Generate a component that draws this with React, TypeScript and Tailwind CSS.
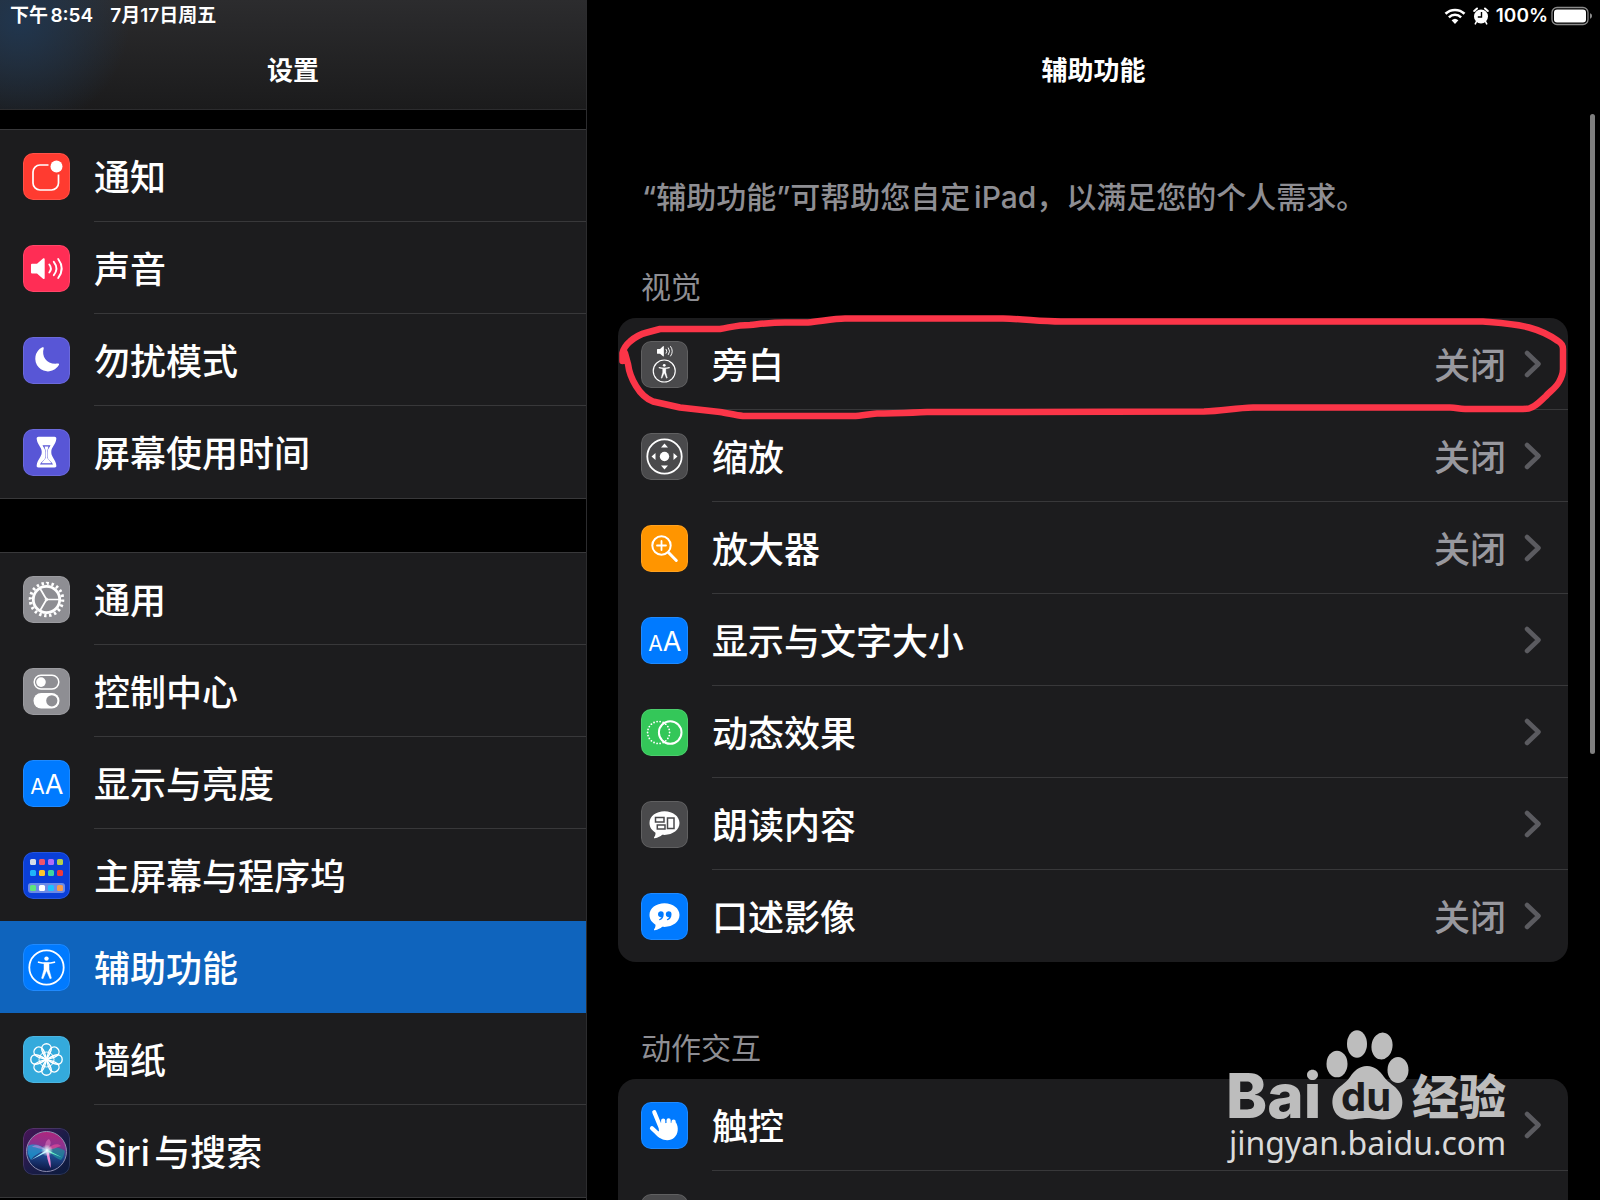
import React from 'react';

interface RowItem {
  label: string;
  icon: React.ReactNode;
  tile: string;
  value?: string;
  active?: boolean;
}

const Person = () => (
  <>
    <circle cx="23.5" cy="23.5" r="17.2" fill="none" stroke="#fff" strokeWidth="1.8" />
    <circle cx="23.5" cy="14.6" r="2.2" fill="#fff" />
    <path
      d="M15.6 18.2c2.6.7 4.6.9 7.9.9s5.3-.2 7.9-.9"
      fill="none"
      stroke="#fff"
      strokeWidth="1.7"
      strokeLinecap="round"
    />
    <path
      d="M21 19h5v6.5l2.4 8.7-1.4.6-3.5-8.3-3.5 8.3-1.4-.6L21 25.500z"
      fill="#fff"
      stroke="#fff"
      strokeWidth=".5"
      strokeLinejoin="round"
    />
  </>
);

const Speaker = () => (
  <>
    <path
      d="M9 18.8h5l6-5.3c.8-.7 1.7-.2 1.7.8v18.6c0 1-.9 1.5-1.7.8l-6-5.3H9a1 1 0 0 1-1-1v-7.6a1 1 0 0 1 1-1z"
      fill="#fff"
    />
    <g fill="none" stroke="#fff" strokeWidth="1.9" strokeLinecap="round">
      <path d="M26.3 19.500q3.200 4 0 8" />
      <path d="M30.8 16.800q5.200 6.700 0 13.400" />
      <path d="M35.2 14q7 9.500 0 19" />
    </g>
  </>
);

const LettersAA = () => (
  <g fill="#fff" textAnchor="middle" fontWeight="400" className="font-[Inter,sans-serif]">
    <text x="14.5" y="34" fontSize="21">A</text>
    <text x="31" y="34" fontSize="27">A</text>
  </g>
);

const Bubble = () => (
  <path
    d="M23.500 10.300c-8.400 0-15 5-15 11.800 0 4.300 2.500 7.600 6 9.600.1 1.800-.4 3.200-1.400 4.500-.5.700 0 1.100.7 1 3.200-.5 5.600-1.800 7.400-3.400.8.100 1.500.1 2.300.1 8.400 0 15-5.100 15-11.800s-6.600-11.800-15-11.800z"
    fill="#fff"
  />
);

const Notifications = () => (
  <>
    <path
      d="M25.500 12H17a7 7 0 0 0-7 7v11a7 7 0 0 0 7 7h11.500a7 7 0 0 0 7-7v-8.500"
      fill="none"
      stroke="#fff"
      strokeWidth="1.7"
    />
    <circle cx="33.5" cy="13.5" r="6" fill="#fff" />
  </>
);

const Moon = () => (
  <path
    d="M19.300 10.300c.9-.4 1.700.2 1.400 1.100-2.500 8.200 3.400 16.600 14.100 15.200 1-.1 1.500.6 1.100 1.500A12.700 12.700 0 1 1 19.300 10.300z"
    fill="#fff"
  />
);

const Hourglass = () => (
  <>
    <path
      d="M15.500 7.800h16c1.500 0 2 1 1.800 2.300-.6 5.400-5 8.400-5 12.400v1.300c0 4 4.400 7 5 12.400.2 1.300-.3 2.300-1.800 2.300h-16c-1.500 0-2-1-1.800-2.300.6-5.400 5-8.400 5-12.400v-1.300c0-4-4.400-7-5-12.400-.2-1.300.3-2.300 1.800-2.300z"
      fill="#fff"
    />
    <path
      d="M19.500 16.200h8c-1.200 2.500-2.900 3.700-2.900 7v4c0 4.300 3.700 4.500 5.400 8.300H17c1.700-3.800 5.400-4 5.400-8.300v-4c0-3.300-1.700-4.500-2.900-7z"
      fill="#5856d6"
    />
    <path d="M21.500 17.500h4l-1.200 4.200V29l4.200 5.300h-10L22.700 29v-7.300z" fill="#fff" />
  </>
);

const Gear = () => (
  <g fill="none" stroke="#fff">
    <circle cx="23.5" cy="23.5" r="13.2" strokeWidth="2.8" />
    <circle cx="23.5" cy="23.5" r="16.2" strokeWidth="3.2" pathLength="80" strokeDasharray="1.9 2.1" />
    <path d="M23.500 23.500H36M23.500 23.500l-6.400-11M23.500 23.500l-6.400 11" strokeWidth="1.7" />
    <circle cx="23.5" cy="23.5" r="1.3" strokeWidth="1" />
  </g>
);

const Toggles = () => (
  <>
    <rect x="11.2" y="7.3" width="24.6" height="13.6" rx="6.8" fill="none" stroke="#fff" strokeWidth="1.5" />
    <circle cx="18" cy="14.1" r="4.8" fill="#fff" />
    <rect x="10.5" y="25" width="26" height="15.5" rx="7.7" fill="#fff" />
    <circle cx="28.8" cy="32.8" r="5.6" fill="#8e8e93" />
  </>
);

const APP_COLORS = [
  ['#d8dce8', '#f2536b', '#b06cf8', '#b5d04a'],
  ['#1eb5f8', '#fcc62d', '#3fd6a0', '#f03a3a'],
  ['#5ee67c', '#ffffff', '#1ec2ff', '#f79c4b'],
];
const APP_X = [7, 16, 25, 34];
const APP_Y = [7, 18, 33];

const HomeScreen = () => (
  <>
    <rect x="5" y="31" width="37" height="10" rx="3" fill="#fff" fillOpacity=".4" />
    {APP_COLORS.map((row, r) =>
      row.map((color, c) => (
        <rect key={`${r}-${c}`} x={APP_X[c]} y={APP_Y[r]} width="6" height="6" rx="1.5" fill={color} />
      ))
    )}
  </>
);

const Flower = () => (
  <g fill="none" stroke="#fff" strokeWidth="1.4">
    {[0, 45, 90, 135, 180, 225, 270, 315].map((angle) => (
      <path
        key={angle}
        d="M23.500 23.500C21 19 18.700 16.200 18.700 12.600a4.800 4.800 0 0 1 9.600 0c0 3.600-2.300 6.400-4.800 10.900z"
        transform={`rotate(${angle} 23.5 23.5)`}
      />
    ))}
    <circle cx="23.5" cy="23.5" r="7.5" strokeWidth="1" />
  </g>
);

const Siri = () => (
  <>
    <defs>
      <linearGradient id="siriBack" x1="0" y1="0" x2="1" y2="1">
        <stop offset="0" stopColor="#4a1458" />
        <stop offset=".5" stopColor="#1c1c48" />
        <stop offset="1" stopColor="#0b1b3c" />
      </linearGradient>
      <linearGradient id="siriOrb" x1=".55" y1="0" x2=".45" y2="1">
        <stop offset="0" stopColor="#b0257c" />
        <stop offset=".35" stopColor="#8a3390" />
        <stop offset=".6" stopColor="#1f4a90" />
        <stop offset="1" stopColor="#0d1440" />
      </linearGradient>
      <radialGradient id="siriGlow">
        <stop offset="0" stopColor="#fff" />
        <stop offset=".35" stopColor="#d8f4ff" stopOpacity=".75" />
        <stop offset="1" stopColor="#fff" stopOpacity="0" />
      </radialGradient>
    </defs>
    <rect width="47" height="47" rx="10" fill="url(#siriBack)" />
    <circle cx="23.5" cy="23.5" r="20" fill="url(#siriOrb)" stroke="#8f8fb0" strokeWidth="1" />
    <path d="M24 22C18 17 10 15 5 18c-1 5 0 10 3 14 3-5 9-8 16-10z" fill="#1f9fd6" fillOpacity=".7" />
    <path d="M24 22c7-4 13-3 18 1-1 4-2 7-4 9-4-1-9-5-14-10z" fill="#1b8f9c" fillOpacity=".7" />
    <path d="M23 22c-2-5 0-10 3-11 3 3 2 7-3 11z" fill="#f08ac8" fillOpacity=".45" />
    <path d="M23 22c6-6 12-7 15-4-4 1-8 4-15 4z" fill="#e0489a" fillOpacity=".7" />
    <path d="M23 22c-6-5-11-6-14-3 4 0 8 2 14 3z" fill="#c58ad8" fillOpacity=".6" />
    <path d="M23 21h2c1.500 7 3.500 14 2.500 19C25 34 23.500 28 23 21z" fill="#f08ad8" />
    <path d="M25 21L8 32l16-8z" fill="#a9f5ff" />
    <path d="M23 21l16 8.500-14-5.500z" fill="#6af5c8" />
    <circle cx="24" cy="22.5" r="6" fill="url(#siriGlow)" />
  </>
);

const VoiceOver = () => (
  <>
    <g transform="translate(12 -1.5) scale(.5)">
      <Speaker />
    </g>
    <g transform="translate(8.2 15) scale(.64)">
      <Person />
    </g>
  </>
);

const ZoomPad = () => (
  <>
    <circle cx="23.5" cy="23.5" r="17.2" fill="none" stroke="#fff" strokeWidth="1.8" />
    <circle cx="23.5" cy="23.5" r="4.7" fill="#fff" />
    <path
      d="M23.500 10.500l3.500 4h-7zM23.500 36.500l3.500-4h-7zM10.500 23.500l4-3.500v7zM36.500 23.500l-4-3.500v7z"
      fill="#fff"
    />
  </>
);

const Magnifier = () => (
  <g fill="none" stroke="#fff" strokeLinecap="round">
    <circle cx="20.5" cy="20.5" r="9.2" strokeWidth="2" />
    <path d="M20.500 16v9M16 20.500h9" strokeWidth="1.8" />
    <path d="M27.500 27.500l7.800 8" strokeWidth="3" />
  </g>
);

const Motion = () => (
  <g fill="none" stroke="#fff">
    <circle cx="29.2" cy="23.5" r="11.3" strokeWidth="2" />
    <circle
      cx="17.6"
      cy="23.5"
      r="11"
      strokeWidth="1.8"
      strokeLinecap="round"
      pathLength="88"
      strokeDasharray="0 4"
    />
  </g>
);

const SpokenContent = () => (
  <>
    <Bubble />
    <g fill="none" stroke="#4a4a4c" strokeWidth="1.5">
      <rect x="14.5" y="16.5" width="8.5" height="4.5" />
      <rect x="16.3" y="24" width="7.7" height="4" />
      <rect x="26.5" y="17" width="6.5" height="10.5" />
    </g>
  </>
);

const Descriptions = () => (
  <>
    <Bubble />
    <g fill="#007aff">
      <path d="M19.700 18.300a3 3 0 0 0-.5 5.900c.5.100 1 0 1.300-.1-.4 1-1.100 1.700-2.200 2.200-.5.300-.2 1 .4.900 2.500-.6 4-2.800 4-5.700a3 3 0 0 0-3-3.200z" />
      <path d="M27.500 18.300a3 3 0 0 0-.5 5.900c.5.100 1 0 1.300-.1-.4 1-1.100 1.700-2.200 2.200-.5.300-.2 1 .4.900 2.500-.6 4-2.800 4-5.700a3 3 0 0 0-3-3.200z" />
    </g>
  </>
);

const Touch = () => (
  <>
    <path
      d="M13.300 10.300L19 24M11 26.200l7.500 7M22.200 18.500v6M27.600 18.300v6M32.600 19.500v5"
      fill="none"
      stroke="#fff"
      strokeWidth="4.2"
      strokeLinecap="round"
    />
    <path
      d="M17 21.500L35 20.500c1.500 2.600 2 5.300 1.700 8-.6 5.700-4.800 9.700-10.500 9.700-5 0-8-2.200-11.700-6.200l3.500-3z"
      fill="#fff"
    />
  </>
);

const DEVICE_ITEMS: RowItem[] = [
  { label: '通知', icon: <Notifications />, tile: 'bg-[#ff3b30]' },
  { label: '声音', icon: <Speaker />, tile: 'bg-[#ff2d55]' },
  { label: '勿扰模式', icon: <Moon />, tile: 'bg-[#5856d6]' },
  { label: '屏幕使用时间', icon: <Hourglass />, tile: 'bg-[#5856d6]' },
];

const GENERAL_ITEMS: RowItem[] = [
  { label: '通用', icon: <Gear />, tile: 'bg-[#8e8e93]' },
  { label: '控制中心', icon: <Toggles />, tile: 'bg-[#8e8e93]' },
  { label: '显示与亮度', icon: <LettersAA />, tile: 'bg-[#007aff]' },
  { label: '主屏幕与程序坞', icon: <HomeScreen />, tile: 'bg-[#0a3fd8]' },
  { label: '辅助功能', icon: <Person />, tile: 'bg-[#007aff]', active: true },
  { label: '墙纸', icon: <Flower />, tile: 'bg-[#34aadc]' },
  { label: 'Siri与搜索', icon: <Siri />, tile: 'bg-[#1c1c48]' },
];

const VISION_ITEMS: RowItem[] = [
  { label: '旁白', icon: <VoiceOver />, tile: 'bg-[#4a4a4c]', value: '关闭' },
  { label: '缩放', icon: <ZoomPad />, tile: 'bg-[#4a4a4c]', value: '关闭' },
  { label: '放大器', icon: <Magnifier />, tile: 'bg-[#ff9500]', value: '关闭' },
  { label: '显示与文字大小', icon: <LettersAA />, tile: 'bg-[#007aff]' },
  { label: '动态效果', icon: <Motion />, tile: 'bg-[#34c759]' },
  { label: '朗读内容', icon: <SpokenContent />, tile: 'bg-[#4a4a4c]' },
  { label: '口述影像', icon: <Descriptions />, tile: 'bg-[#007aff]', value: '关闭' },
];

const MOTOR_ITEMS: RowItem[] = [
  { label: '触控', icon: <Touch />, tile: 'bg-[#007aff]' },
  { label: '切换控制', icon: null, tile: 'bg-[#4a4a4c]' },
];

const Tile = ({ item }: { item: RowItem }) => (
  <span className={`h-[47px] w-[47px] shrink-0 overflow-hidden rounded-[10px] ${item.tile}`}>
    <svg viewBox="0 0 47 47" className="h-full w-full" aria-hidden="true">
      {item.icon}
      <rect x=".5" y=".5" width="46" height="46" rx="9.5" fill="none" stroke="#fff" strokeOpacity=".12" />
    </svg>
  </span>
);

const Chevron = () => (
  <svg viewBox="0 0 18 28" className="h-7 w-[18px] shrink-0" aria-hidden="true">
    <path
      d="M3 3l11.500 11L3 25"
      fill="none"
      stroke="#5b5b60"
      strokeWidth="4.5"
      strokeLinecap="round"
      strokeLinejoin="round"
    />
  </svg>
);

const SidebarList = ({ items }: { items: RowItem[] }) => (
  <ul className="border-y border-[#38383a] bg-[#1c1c1e]">
    {items.map((item, idx) => {
      const next = items[idx + 1];
      const lined = next && !next.active && !item.active;
      return (
        <li key={item.label}>
          <a
            href="#"
            aria-current={item.active ? 'page' : undefined}
            className={`flex h-[92px] items-center gap-6 pl-[23px] ${item.active ? 'bg-[#0f64bd]' : ''}`}
          >
            <Tile item={item} />
            <span
              className={`flex h-full flex-1 items-center border-b pt-1 ${
                lined ? 'border-[#38383a]' : 'border-transparent'
              }`}
            >
              {item.label}
            </span>
          </a>
        </li>
      );
    })}
  </ul>
);

const CardList = ({ items }: { items: RowItem[] }) => (
  <ul className="overflow-hidden rounded-[18px] bg-[#1c1c1e]">
    {items.map((item, idx) => (
      <li key={item.label}>
        <a href="#" className="flex h-[92px] items-center gap-6 pl-[23px]">
          <Tile item={item} />
          <span
            className={`flex h-full flex-1 items-center gap-[18px] border-b pr-[26px] ${
              idx < items.length - 1 ? 'border-[#38383a]' : 'border-transparent'
            }`}
          >
            <span className="flex-1 pt-1">{item.label}</span>
            {item.value && <span className="pt-1 text-[#98989e]">{item.value}</span>}
            <Chevron />
          </span>
        </a>
      </li>
    ))}
  </ul>
);

const Scribble = () => (
  <svg
    viewBox="618 317 950 92"
    preserveAspectRatio="none"
    className="pointer-events-none absolute top-0 left-0 h-[92px] w-full overflow-visible"
    aria-hidden="true"
  >
    <path
      d="M622.500 360V352C624 346 627 343 630 340.500C635 336 641 333 647 331.500L660 328H720C732 326 738 324 750 324C765 322.500 772 321.500 785 321.500H808C822 320 835 317.500 845 317.500H1003C1025 318 1040 320.500 1061 320.500H1483C1500 322 1516 323 1529 326.500C1542 330 1551 335 1558 340Q1563 343 1563 348V368Q1563 374 1559 381C1555 388 1549 391 1546 395C1541 399 1537 405 1529 407.500L1523 408H1465C1458 408 1457 406.500 1450 406.500H1253C1235 407 1222 410 1204 410.500L1010 411H927C910 412 895 412 877 412.500C868 413 862 415 853 415H743C735 414 727 412 720 411L680 406.500L653 400.500C644 397 639 390 636 385C631 377 629 371 628 363L625 352"
      fill="none"
      stroke="#fb3548"
      strokeWidth="6.500"
      strokeLinecap="round"
      strokeLinejoin="round"
    />
  </svg>
);

const StatusIcons = () => (
  <>
    <svg viewBox="0 0 22 16" className="h-4 w-[22px]" aria-hidden="true">
      <path d="M1.500 5.800a13.600 13.600 0 0 1 19 0" fill="none" stroke="#fff" strokeWidth="2.6" />
      <path d="M4.900 9.300a8.700 8.700 0 0 1 12.200 0" fill="none" stroke="#fff" strokeWidth="2.5" />
      <path d="M7.600 12.300a5 5 0 0 1 6.800 0L11 15.900z" fill="#fff" />
    </svg>
    <svg viewBox="0 0 16 18" className="h-[18px] w-4" aria-hidden="true">
      <circle cx="8" cy="9.5" r="7" fill="#fff" />
      <path d="M1.200 4L4 1.500M14.800 4L12 1.500" stroke="#fff" strokeWidth="2" strokeLinecap="round" />
      <path d="M3.500 14.500L2.300 16.800M12.500 14.500l1.200 2.300" stroke="#fff" strokeWidth="1.6" strokeLinecap="round" />
      <path d="M8.500 5v5H4.800" fill="none" stroke="#000" strokeWidth="1.4" />
    </svg>
  </>
);

const Battery = () => (
  <svg viewBox="0 0 42 20" className="h-5 w-[42px]" aria-hidden="true">
    <rect x="1" y="1.5" width="36" height="17" rx="5" fill="none" stroke="#8a8a8a" strokeWidth="1.3" />
    <rect x="3" y="3.5" width="32" height="13" rx="3" fill="#fff" />
    <path d="M39 7.300c1.500.5 2 1.500 2 2.700s-.5 2.200-2 2.700z" fill="#8a8a8a" />
  </svg>
);

const Watermark = () => (
  <svg
    viewBox="0 0 292 140"
    className="pointer-events-none absolute right-[84px] bottom-[32px] h-[140px] w-[292px]"
    role="img"
    aria-label="Baidu 经验"
  >
    <g fill="#bdbdbd">
      <text x="2" y="90" fontSize="62" fontWeight="800" className="font-[Inter,sans-serif]">Bai</text>
      <ellipse cx="113" cy="36" rx="10.5" ry="13.3" />
      <ellipse cx="133" cy="16" rx="10" ry="13.7" />
      <ellipse cx="158" cy="18" rx="10.5" ry="13.5" transform="rotate(8 158 18)" />
      <ellipse cx="174" cy="42" rx="10.5" ry="13" />
      <path d="M143 38c-8 0-13 5-17 11-5 7-11 9-15 15-3 5-3.500 12-1 18 3 7 9 9.500 16 9.500 6 0 10-1.500 17-1.500s11 1.500 17 1.500c8 0 14-3 17-10 2.500-6 1.500-13-2-18-4-6-10-8-15-14.500-4-6-9-11-17-11z" />
      <text x="188" y="86" fontSize="47" fontWeight="900" className="font-['Noto_Sans_CJK_SC',sans-serif]">经验</text>
    </g>
    <text x="142" y="83" fontSize="40" fontWeight="700" textAnchor="middle" fill="#1c1c1e" className="font-[Inter,sans-serif]">
      du
    </text>
    <text x="5" y="127" fontSize="32" fontWeight="400" fill="#dadada" className="font-['Noto_Sans',sans-serif]">
      jingyan.baidu.com
    </text>
  </svg>
);

export default function App() {
  return (
    <div className="relative flex h-screen overflow-hidden bg-black font-[Inter,'Noto_Sans_CJK_SC',sans-serif] text-[36px] leading-[48px] font-medium text-white [text-autospace:normal]">
      {/* Sidebar */}
      <nav className="w-[587px] shrink-0 overflow-hidden border-r border-[#2c2c2e]">
        <header className="h-[110px] border-b border-[#2c2c2e] bg-[radial-gradient(circle_at_20px_20px,#20364f_0,#20364f00_110px),linear-gradient(#2c2c2e,#1b1b1c)]">
          <div className="flex h-[31px] items-center gap-[17px] pl-[10px] text-[19px] leading-6 font-semibold">
            <span>下午8:54</span>
            <span className="[text-autospace:no-autospace]">7月17日周五</span>
          </div>
          <h1 className="pt-[22px] text-center text-[26px] leading-9 font-bold">设置</h1>
        </header>
        <div className="flex flex-col gap-[53px] pt-[19px]">
          <SidebarList items={DEVICE_ITEMS} />
          <SidebarList items={GENERAL_ITEMS} />
        </div>
      </nav>

      {/* Detail pane */}
      <main className="relative min-w-0 flex-1 overflow-hidden">
        <header className="h-[110px]">
          <div className="flex h-[31px] items-center justify-end gap-[7px] pr-[7px] text-[19px] leading-6 font-semibold">
            <StatusIcons />
            <span className="flex items-center gap-[3px]">
              100%
              <Battery />
            </span>
          </div>
          <h2 className="pt-[22px] text-center text-[26px] leading-9 font-bold">辅助功能</h2>
        </header>

        <div className="pr-8 pl-[31px]">
          <p className="px-6 pt-[65px] text-[30px] leading-[44px] text-[#8e8e93]">
            “辅助功能”可帮助您自定iPad，以满足您的个人需求。
          </p>
          <h3 className="px-[23px] pt-[46px] pb-[9px] text-[30px] leading-[44px] font-normal text-[#8e8e93]">视觉</h3>
          <div className="relative">
            <CardList items={VISION_ITEMS} />
            <Scribble />
          </div>
          <h3 className="px-[23px] pt-[64px] pb-[9px] text-[30px] leading-[44px] font-normal text-[#8e8e93]">动作交互</h3>
          <CardList items={MOTOR_ITEMS} />
        </div>

        <div className="absolute top-[114px] right-[5px] h-[640px] w-[5px] rounded-full bg-[#7f7f7f]" />
      </main>

      <Watermark />
    </div>
  );
}
